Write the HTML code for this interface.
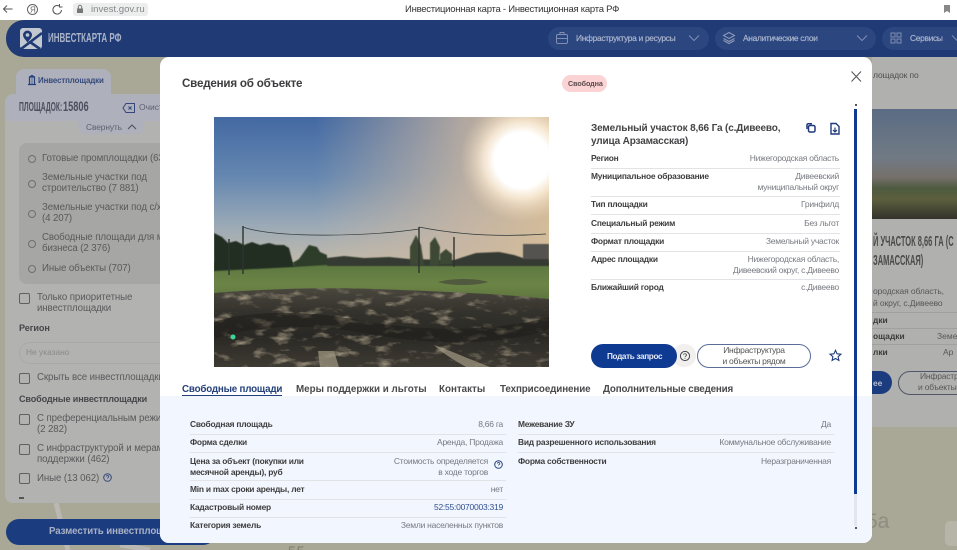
<!DOCTYPE html>
<html><head><meta charset="utf-8">
<style>
html,body{margin:0;padding:0;width:957px;height:550px;overflow:hidden;background:#a8a695;font-family:"Liberation Sans",sans-serif}
#r{position:relative;width:957px;height:550px;overflow:hidden}
.t{position:absolute;white-space:nowrap;line-height:11px}
.a{position:absolute}
.k{font-weight:bold;font-size:8.4px;letter-spacing:-.22px;color:#3d3d3d}
.v{font-size:8.5px;letter-spacing:-.25px;color:#777a80;text-align:right}
.l{position:absolute;height:1px;background:#e1e3e6}
.p{font-size:9.7px;letter-spacing:-.1px;color:#5a5a5c}
.n{font-size:8.4px;letter-spacing:-.3px;color:#a9b4cc;-webkit-text-stroke:.2px #a9b4cc}
.tb{font-size:9.8px;font-weight:bold;color:#4a4a4c}
.cb{position:absolute;left:19px;width:8.5px;height:8.5px;border:1px solid #5f6063;border-radius:2px}
.rd{position:absolute;left:28px;width:6px;height:6px;border:1px solid #6f706e;border-radius:50%}
svg{position:absolute}
</style></head><body><div id="r">

<!-- map background -->
<svg style="left:0;top:0" width="957" height="550">
<rect width="957" height="550" fill="#a9a795"/>
<path d="M872 427L957 415V350H872Z" fill="#b4b3ad"/>
<path d="M940 57l10 50M930 57l8 30" stroke="#b8b6aa" stroke-width="4" fill="none"/>
<path d="M56 503l12 47M120 545l30 5" stroke="#b9b8b2" stroke-width="5" fill="none"/>
</svg>

<!-- sidebar -->
<div class="a" style="left:16px;top:69px;width:95px;height:30px;background:#aeb0bc;border-radius:8px 8px 0 0"></div>
<div class="a" style="left:5px;top:94px;width:170px;height:27px;background:#aeb0bc;border-radius:8px 0 0 0"></div>
<div class="a" style="left:5px;top:121px;width:170px;height:382px;background:#b2b2b1;border-radius:0 0 0 8px"></div>
<div class="a" style="left:78px;top:120px;width:66px;height:14px;background:#aeb0bc;border-radius:0 0 7px 7px"></div>
<div class="a" style="left:19px;top:143px;width:150px;height:141px;background:#a6a6a4;border-radius:8px"></div>
<svg style="left:26px;top:74px" width="12" height="12"><path d="M2 10.5h8M3.5 10.5V3h5v7.5M3.5 3L6 1.5 8.5 3M5.5 5h1M5.5 7h1M5.5 9h1" stroke="#24407c" stroke-width="1.2" fill="none"/></svg>
<div class="t" style="left:38px;top:75px;font-size:7.9px;letter-spacing:-.1px;font-weight:bold;color:#354a7b">Инвестплощадки</div>
<div class="t" style="left:19px;top:102px;font-size:12.5px;font-weight:bold;color:#4b4f5e;transform:scaleX(.54);transform-origin:0 0">ПЛОЩАДОК:</div>
<div class="t" style="left:63px;top:101px;font-size:14px;font-weight:bold;color:#4b4f5e;transform:scaleX(.66);transform-origin:0 0">15806</div>
<svg style="left:122px;top:102px" width="14" height="12"><path d="M4 1.5h8.5v9H4L1 6z" stroke="#33477a" fill="none"/><path d="M6.5 4.5l3 3m0-3l-3 3" stroke="#33477a"/></svg>
<div class="t" style="left:139px;top:102px;font-size:8.5px;color:#5e6270">Очистить</div>
<div class="t" style="left:86px;top:122px;font-size:8.4px;letter-spacing:-.1px;color:#5e6270">Свернуть</div>
<svg style="left:127px;top:123px" width="10" height="8"><path d="M1 6l4-4 4 4" stroke="#4d5262" stroke-width="1.1" fill="none"/></svg>

<div class="rd" style="top:155px"></div><div class="t p" style="left:42px;top:153px">Готовые промплощадки (63</div>
<div class="rd" style="top:180px"></div><div class="t p" style="left:42px;top:173px;line-height:10.5px">Земельные участки под<br>строительство (7 881)</div>
<div class="rd" style="top:210px"></div><div class="t p" style="left:42px;top:203px;line-height:10.5px">Земельные участки под с/х<br>(4 207)</div>
<div class="rd" style="top:240px"></div><div class="t p" style="left:42px;top:233px;line-height:10.5px">Свободные площади для м<br>бизнеса (2 376)</div>
<div class="rd" style="top:265px"></div><div class="t p" style="left:42px;top:263px">Иные объекты (707)</div>

<div class="cb" style="top:293px"></div><div class="t p" style="left:37px;top:292px;line-height:11px">Только приоритетные<br>инвестплощадки</div>
<div class="t" style="left:19px;top:323px;font-size:9.1px;font-weight:bold;letter-spacing:-.1px;color:#46474a">Регион</div>
<div class="a" style="left:19px;top:342px;width:160px;height:20px;border:1px solid #a9a9a8;border-radius:11px 0 0 11px;border-right:0"></div>
<div class="t" style="left:26px;top:347px;font-size:8.4px;color:#8a8a8a">Не указано</div>
<div class="cb" style="top:373px"></div><div class="t p" style="left:37px;top:372px">Скрыть все инвестплощадки</div>
<div class="t" style="left:19px;top:394px;font-size:9.1px;font-weight:bold;letter-spacing:-.15px;color:#46474a">Свободные инвестплощадки</div>
<div class="cb" style="top:414px"></div><div class="t p" style="left:37px;top:413px;line-height:11px">С преференциальным режим<br>(2 282)</div>
<div class="cb" style="top:444px"></div><div class="t p" style="left:37px;top:443px;line-height:11px">С инфраструктурой и мерами<br>поддержки (462)</div>
<div class="cb" style="top:473px"></div><div class="t p" style="left:37px;top:473px">Иные (13 062)</div>
<svg style="left:102px;top:472px" width="11" height="11"><circle cx="5.5" cy="5.5" r="3.8" stroke="#33477a" fill="none"/><path d="M4.2 4.5c.3-1.3 2.6-1.2 2.6.1 0 .9-1.3 1-1.3 1.9" stroke="#33477a" stroke-width=".8" fill="none"/></svg>
<div class="a" style="left:19px;top:497px;width:5px;height:1.5px;background:#555"></div>

<div class="a" style="left:6px;top:519px;width:210px;height:26px;background:#1c3c80;border-radius:13px"></div>
<div class="t" style="left:49px;top:526px;font-size:9.7px;letter-spacing:-.1px;font-weight:bold;color:#a8b0c4">Разместить инвестплощадку</div>

<!-- right side card -->
<div class="a" style="left:872px;top:57px;width:85px;height:370px;background:#b0b0ae"></div>
<div class="t" style="left:873px;top:70px;font-size:8.5px;letter-spacing:-.1px;color:#4f4f50">лощадок по</div>
<div class="a" style="left:872px;top:109px;width:85px;height:110px;background:linear-gradient(#5a6c84 0,#717a84 45%,#75706a 62%,#4e5a40 72%,#5c5f3d 82%,#34322c 100%)"></div>
<div class="t" style="left:873px;top:235.5px;font-size:15px;font-weight:bold;color:#4b4b4b;transform:scaleX(.5);transform-origin:0 0">Й УЧАСТОК 8,66 ГА (С</div>
<div class="t" style="left:873px;top:254.5px;font-size:15px;font-weight:bold;color:#4b4b4b;transform:scaleX(.5);transform-origin:0 0">ЗАМАССКАЯ)</div>
<div class="t" style="left:873px;top:286px;font-size:8.5px;letter-spacing:-.1px;color:#58585a">ородская область,</div>
<div class="t" style="left:873px;top:298px;font-size:8.5px;letter-spacing:-.1px;color:#58585a">й округ, с.Дивеево</div>
<div class="a" style="left:872px;top:312px;width:85px;height:1px;background:#a0a0a0"></div>
<div class="t" style="left:873px;top:315px;font-size:8.4px;font-weight:bold;color:#3b3b3c">дки</div>
<div class="a" style="left:872px;top:328px;width:85px;height:1px;background:#a0a0a0"></div>
<div class="t" style="left:873px;top:331px;font-size:8.4px;font-weight:bold;color:#3b3b3c">ощадки</div>
<div class="t" style="left:937px;top:331px;font-size:8.5px;color:#58585a">Земе</div>
<div class="a" style="left:872px;top:344px;width:85px;height:1px;background:#a0a0a0"></div>
<div class="t" style="left:873px;top:347px;font-size:8.4px;font-weight:bold;color:#3b3b3c">лки</div>
<div class="t" style="left:943px;top:347px;font-size:8.5px;color:#58585a">Ар</div>
<div class="a" style="left:860px;top:371px;width:32px;height:23px;background:#1c3c80;border-radius:0 12px 12px 0"></div>
<div class="t" style="left:873px;top:378px;font-size:8.4px;font-weight:bold;color:#b8bfd0">ее</div>
<div class="a" style="left:898px;top:371px;width:70px;height:22px;border:1px solid #4f5668;border-radius:12px"></div>
<div class="t" style="left:920px;top:371px;font-size:8.5px;letter-spacing:-.2px;color:#58585a">Инфрастр</div>
<div class="t" style="left:918px;top:382px;font-size:8.5px;letter-spacing:-.2px;color:#58585a">и объекты</div>
<div class="t" style="left:866px;top:516px;font-size:21px;color:#8e8d80">5а</div>
<div class="a" style="left:945px;top:521px;width:20px;height:25px;background:#b6b5a8;border-radius:5px"></div>
<div class="t" style="left:288px;top:546px;font-size:14px;color:#7d7c70;letter-spacing:1px">55</div>

<!-- browser bar -->
<div class="a" style="left:0;top:0;width:957px;height:20px;background:#fff"></div>
<svg style="left:2px;top:3px" width="12" height="12"><path d="M10.5 6H1.8M5 2.5L1.5 6 5 9.5" stroke="#555" fill="none"/></svg>
<svg style="left:26px;top:3px" width="13" height="13"><circle cx="6.5" cy="6.5" r="5" stroke="#666" fill="none"/><text x="4" y="9.5" font-size="8" fill="#666" font-family="Liberation Sans">Я</text></svg>
<svg style="left:51px;top:3px" width="13" height="13"><path d="M10.5 7a4.3 4.3 0 1 1-1.6-3.6M8.5 1v3h3" stroke="#555" fill="none"/></svg>
<div class="a" style="left:73px;top:3px;width:75px;height:13px;background:#eceded;border-radius:3px"></div>
<svg style="left:75px;top:4px" width="10" height="10"><rect x="2" y="4.5" width="6" height="4.5" fill="#777"/><path d="M3.3 4.5V3a1.7 1.7 0 0 1 3.4 0v1.5" stroke="#777" fill="none"/></svg>
<div class="t" style="left:91px;top:4px;font-size:9.6px;color:#85878a">invest.gov.ru</div>
<div class="t" style="left:405px;top:4px;font-size:9.5px;letter-spacing:-.25px;color:#333">Инвестиционная карта - Инвестиционная карта РФ</div>
<svg style="left:943px;top:4px" width="8" height="10"><path d="M1 1h6v8L4 7 1 9z" fill="#888"/></svg>

<!-- header -->
<div class="a" style="left:6px;top:20px;width:960px;height:37px;background:#1f3a74;border-radius:18px 0 0 18px"></div>
<svg style="left:20px;top:28px" width="22" height="22"><rect width="22" height="21" rx="3" fill="#c3c7cf"/><path d="M1 21L22 5M10 14l10 7" stroke="#1f3a74" stroke-width="2.6"/><circle cx="7.5" cy="7" r="4.5" fill="#1f3a74"/><circle cx="7.5" cy="7" r="1.8" fill="#c3c7cf"/><path d="M3.6 9.5l3.9 5 3.9-5z" fill="#1f3a74"/></svg>
<div class="t" style="left:48px;top:33px;font-size:12.5px;font-weight:bold;color:#a9b2c8;transform:scaleX(.64);transform-origin:0 0">ИНВЕСТКАРТА РФ</div>

<div class="a" style="left:548px;top:27px;width:161px;height:23px;background:#2c4680;border-radius:12px"></div>
<div class="a" style="left:715px;top:27px;width:161px;height:23px;background:#2c4680;border-radius:12px"></div>
<div class="a" style="left:882px;top:27px;width:90px;height:23px;background:#2c4680;border-radius:12px"></div>
<svg style="left:555px;top:31px" width="14" height="14"><rect x="1.5" y="3.5" width="11" height="9" rx="1.5" stroke="#7f8fb1" fill="none"/><path d="M5 3.5V1.5h4v2M1.5 7.5h11" stroke="#7f8fb1" fill="none"/></svg>
<div class="t n" style="left:576px;top:33px">Инфраструктура и ресурсы</div>
<svg style="left:688px;top:34px" width="12" height="9"><path d="M1 1.5l5 5 5-5" stroke="#7f8fb1" fill="none"/></svg>
<svg style="left:722px;top:31px" width="14" height="14"><path d="M7 1.5l5.5 3-5.5 3-5.5-3zM1.5 7.5l5.5 3 5.5-3M1.5 9.5l5.5 3 5.5-3" stroke="#8e9bb9" fill="none"/></svg>
<div class="t n" style="left:743px;top:33px">Аналитические слои</div>
<svg style="left:856px;top:34px" width="12" height="9"><path d="M1 1.5l5 5 5-5" stroke="#7f8fb1" fill="none"/></svg>
<svg style="left:890px;top:32px" width="12" height="12"><path d="M1 1h4v4H1zM7 1h4v4H7zM1 7h4v4H1zM7 7h4v4H7z" stroke="#7f8fb1" fill="none"/></svg>
<div class="t n" style="left:910px;top:33px">Сервисы</div>
<svg style="left:951px;top:34px" width="8" height="9"><path d="M1 1.5l5 5" stroke="#7f8fb1" fill="none"/></svg>

<!-- modal -->
<div class="a" style="left:160px;top:57px;width:712px;height:486px;background:#fff;border-radius:9px;overflow:hidden">
  <div class="a" style="left:0;top:339px;width:712px;height:147px;background:#f2f6fe"></div>
</div>
<div class="t" style="left:182px;top:78px;font-size:11.6px;letter-spacing:-.2px;font-weight:bold;color:#3d3d3f">Сведения об объекте</div>
<div class="a" style="left:562px;top:75px;width:45px;height:17px;background:#fbd3d4;border-radius:9px"></div>
<div class="t" style="left:568px;top:78px;font-size:7.2px;letter-spacing:-.1px;font-weight:bold;color:#5c4a4c">Свободна</div>
<svg style="left:850px;top:70px" width="12" height="13"><path d="M1.5 1.5l9.5 10m0-10l-9.5 10" stroke="#5a5a5a" stroke-width="1.1"/></svg>

<!-- photo -->
<svg style="left:214px;top:117px" width="335" height="250" viewBox="0 0 335 250">
<defs>
<linearGradient id="sky" x1="0" y1="0" x2="0" y2="1"><stop offset="0" stop-color="#4369a3"/><stop offset=".4" stop-color="#6587b0"/><stop offset=".72" stop-color="#9aa9b6"/><stop offset="1" stop-color="#c6bcaa"/></linearGradient>
<linearGradient id="warm" x1="0" y1="0" x2="1" y2="0"><stop offset=".3" stop-color="#cdb7a0" stop-opacity="0"/><stop offset=".75" stop-color="#cdb7a0" stop-opacity=".8"/><stop offset="1" stop-color="#d4bc98" stop-opacity=".98"/></linearGradient>
<radialGradient id="sun"><stop offset=".45" stop-color="#fff"/><stop offset=".62" stop-color="#fff1dc" stop-opacity=".8"/><stop offset="1" stop-color="#e8d2b4" stop-opacity="0"/></radialGradient>
<linearGradient id="gr" x1="0" y1="0" x2="0" y2="1"><stop offset="0" stop-color="#5b7640"/><stop offset=".5" stop-color="#6b8446"/><stop offset="1" stop-color="#586c3a"/></linearGradient>
<linearGradient id="mud" x1="0" y1="0" x2="0" y2="1"><stop offset="0" stop-color="#4a473e"/><stop offset=".3" stop-color="#34322c"/><stop offset=".6" stop-color="#2a2824"/><stop offset="1" stop-color="#3e3b33"/></linearGradient>
<filter id="n" x="0" y="0" width="100%" height="100%" color-interpolation-filters="sRGB"><feTurbulence type="fractalNoise" baseFrequency=".05 .12" numOctaves="4" seed="7"/><feColorMatrix values="0 0 0 0 .6  0 0 0 0 .56  0 0 0 0 .48  3.2 0 0 0 -1.75"/></filter>
<filter id="bl"><feGaussianBlur stdDeviation=".5"/></filter>
<clipPath id="mc"><path d="M0 176C50 172 110 170 160 172S280 176 335 182V250H0Z"/></clipPath>
</defs>
<rect width="335" height="150" fill="url(#sky)"/>
<rect width="335" height="150" fill="url(#warm)"/>
<circle cx="308" cy="43" r="62" fill="url(#sun)"/>
<rect y="145" width="335" height="45" fill="url(#gr)"/>
<g filter="url(#bl)">
<path d="M0 116L8 120 14 126 22 124 30 128 38 125 46 128 55 126 62 128 70 128 75 131 80 150 0 154Z" fill="#232f24"/>
<path d="M80 145L85 142 95 128 103 130 106 135 113 138 113 148 80 150Z" fill="#2f3c2a"/>
<path d="M113 141L130 139 150 141 175 140 195 142 240 143 262 136 285 135 300 138 312 142 335 141V149H113Z" fill="#343b31"/>
<path d="M196 148V130L202 118 207 128 210 148ZM216 148V126L221 120 226 130 225 148ZM226 147V137L232 132 238 137V147Z" fill="#3c4a34"/>
<rect x="309" y="127" width="26" height="15" fill="#55534f"/>
</g>
<path d="M0 176C50 172 110 170 160 172S280 176 335 182V250H0Z" fill="url(#mud)"/>
<g clip-path="url(#mc)"><rect y="170" width="335" height="80" filter="url(#n)"/></g>
<path d="M224 165C238 161 262 161 274 165 262 169 236 169 224 165Z" fill="#47493a" opacity=".7"/>
<path d="M0 205C40 192 100 194 150 204 200 214 280 216 335 200V212C280 232 200 226 150 216 100 208 50 206 0 222Z" fill="#1f1e1a" opacity=".55"/>
<path d="M104 234H120L125 250H106ZM220 228C235 233 250 240 276 250H252C240 243 228 236 220 228Z" fill="#a39a83" opacity=".7"/>
<path d="M29 110C60 121 150 120 205 112M205 110C245 118 290 120 332 117" stroke="#30393a" stroke-width=".7" fill="none"/>
<path d="M29 109V157M205 110V156M240 120V150M15 122V158" stroke="#2f3330" stroke-width="1.4"/>
<circle cx="19" cy="220" r="2.5" fill="#3bd69a"/>
</svg>

<!-- info -->
<div class="t" style="left:591px;top:123px;font-size:10px;letter-spacing:-.15px;font-weight:bold;color:#444446;line-height:12.5px">Земельный участок 8,66 Га (с.Дивеево,<br>улица Арзамасская)</div>
<svg style="left:805px;top:122px" width="12" height="12"><rect x="3.5" y="3.5" width="6.5" height="6.5" rx="1.5" stroke="#1f3a7c" stroke-width="1.5" fill="none"/><path d="M2 7V3a1.3 1.3 0 0 1 1.3-1.3H7" stroke="#1f3a7c" stroke-width="1.5" fill="none"/></svg>
<svg style="left:829px;top:122px" width="12" height="14"><path d="M2 1.5h5l3 3v7.5H2z" stroke="#1f3a7c" stroke-width="1.4" fill="none"/><path d="M6 5.5v4.5M4 8l2 2 2-2" stroke="#1f3a7c" stroke-width="1.2" fill="none"/></svg>
<div class="t k" style="left:591px;top:153px">Регион</div><div class="t v" style="right:118px;top:153px">Нижегородская область</div>
<div class="l" style="left:591px;top:168px;width:249px"></div>
<div class="t k" style="left:591px;top:171px">Муниципальное образование</div><div class="t v" style="right:118px;top:171px">Дивеевский<br>муниципальный округ</div>
<div class="l" style="left:591px;top:196px;width:249px"></div>
<div class="t k" style="left:591px;top:199px">Тип площадки</div><div class="t v" style="right:118px;top:199px">Гринфилд</div>
<div class="l" style="left:591px;top:214px;width:249px"></div>
<div class="t k" style="left:591px;top:218px">Специальный режим</div><div class="t v" style="right:118px;top:218px">Без льгот</div>
<div class="l" style="left:591px;top:233px;width:249px"></div>
<div class="t k" style="left:591px;top:236px">Формат площадки</div><div class="t v" style="right:118px;top:236px">Земельный участок</div>
<div class="l" style="left:591px;top:251px;width:249px"></div>
<div class="t k" style="left:591px;top:254px">Адрес площадки</div><div class="t v" style="right:118px;top:254px">Нижегородская область,<br>Дивеевский округ, с.Дивеево</div>
<div class="l" style="left:591px;top:279px;width:249px"></div>
<div class="t k" style="left:591px;top:282px">Ближайший город</div><div class="t v" style="right:118px;top:282px">с.Дивеево</div>

<!-- actions -->
<div class="a" style="left:672px;top:344px;width:24px;height:23px;background:#f1f0ef;border-radius:12px"></div>
<div class="a" style="left:591px;top:344px;width:86px;height:23.5px;background:#0f3a92;border-radius:12px"></div>
<div class="t" style="left:607px;top:351px;font-size:8.2px;letter-spacing:-.35px;font-weight:bold;color:#e4e9f5">Подать запрос</div>
<svg style="left:678px;top:349px" width="14" height="14"><circle cx="7" cy="7" r="4.6" stroke="#444" fill="none"/><path d="M5.5 5.8c.3-1.5 3-1.4 3 .2 0 1-1.5 1.1-1.5 2.1M7 9v.8" stroke="#444" stroke-width=".8" fill="none"/></svg>
<div class="a" style="left:697px;top:344px;width:112px;height:22px;border:1px solid #5a6c9a;border-radius:12px"></div>
<div class="t" style="left:697px;top:345px;width:114px;text-align:center;font-size:8.5px;letter-spacing:-.3px;color:#555;line-height:10.5px">Инфраструктура<br>и объекты рядом</div>
<svg style="left:829px;top:349px" width="13" height="13"><path d="M6.5 1.3l1.6 3.5 3.8.4-2.8 2.5.8 3.7-3.4-1.9-3.4 1.9.8-3.7L1.1 5.2l3.8-.4z" stroke="#1f3a7c" stroke-width="1.1" fill="none"/></svg>

<!-- scrollbar -->
<div class="a" style="left:854px;top:109px;width:3px;height:385px;background:#0f3a92"></div>
<div class="a" style="left:854px;top:494px;width:3px;height:32px;background:#e4e6ee"></div>
<div class="a" style="left:854.5px;top:104px;width:2px;height:2px;background:#555"></div>
<div class="a" style="left:854.5px;top:527px;width:2px;height:2px;background:#555"></div>

<!-- tabs -->
<div class="t tb" style="left:182px;top:384px;letter-spacing:-.2px;color:#24407c">Свободные площади</div>
<div class="a" style="left:182px;top:395px;width:100px;height:1px;background:#24407c"></div>
<div class="t tb" style="left:296px;top:384px">Меры поддержки и льготы</div>
<div class="t tb" style="left:439px;top:384px">Контакты</div>
<div class="t tb" style="left:500px;top:384px;letter-spacing:-.1px">Техприсоединение</div>
<div class="t tb" style="left:603px;top:384px;letter-spacing:-.17px">Дополнительные сведения</div>

<!-- table left -->
<div class="t k" style="left:190px;top:419px">Свободная площадь</div><div class="t v" style="right:454px;top:419px">8,66 га</div>
<div class="l" style="left:190px;top:434px;width:316px"></div>
<div class="t k" style="left:190px;top:437px">Форма сделки</div><div class="t v" style="right:454px;top:437px">Аренда, Продажа</div>
<div class="l" style="left:190px;top:452px;width:316px"></div>
<div class="t k" style="left:190px;top:456px">Цена за объект (покупки или<br>месячной аренды), руб</div><div class="t v" style="right:469px;top:456px">Стоимость определяется<br>в ходе торгов</div>
<svg style="left:493px;top:459px" width="11" height="11"><circle cx="5.5" cy="5.5" r="3.8" stroke="#24407c" fill="none"/><path d="M4.2 4.5c.3-1.3 2.6-1.2 2.6.1 0 .9-1.3 1-1.3 1.9" stroke="#24407c" stroke-width=".8" fill="none"/></svg>
<div class="l" style="left:190px;top:480px;width:316px"></div>
<div class="t k" style="left:190px;top:484px">Min и max сроки аренды, лет</div><div class="t v" style="right:454px;top:484px">нет</div>
<div class="l" style="left:190px;top:499px;width:316px"></div>
<div class="t k" style="left:190px;top:502px">Кадастровый номер</div><div class="t v" style="right:454px;top:502px;color:#2f5091">52:55:0070003:319</div>
<div class="l" style="left:190px;top:517px;width:316px"></div>
<div class="t k" style="left:190px;top:520px">Категория земель</div><div class="t v" style="right:454px;top:520px">Земли населенных пунктов</div>

<!-- table right -->
<div class="t k" style="left:518px;top:419px">Межевание ЗУ</div><div class="t v" style="right:126px;top:419px">Да</div>
<div class="l" style="left:518px;top:434px;width:316px"></div>
<div class="t k" style="left:518px;top:437px">Вид разрешенного использования</div><div class="t v" style="right:126px;top:437px">Коммунальное обслуживание</div>
<div class="l" style="left:518px;top:452px;width:316px"></div>
<div class="t k" style="left:518px;top:456px">Форма собственности</div><div class="t v" style="right:126px;top:456px">Неразграниченная</div>

</div></body></html>
